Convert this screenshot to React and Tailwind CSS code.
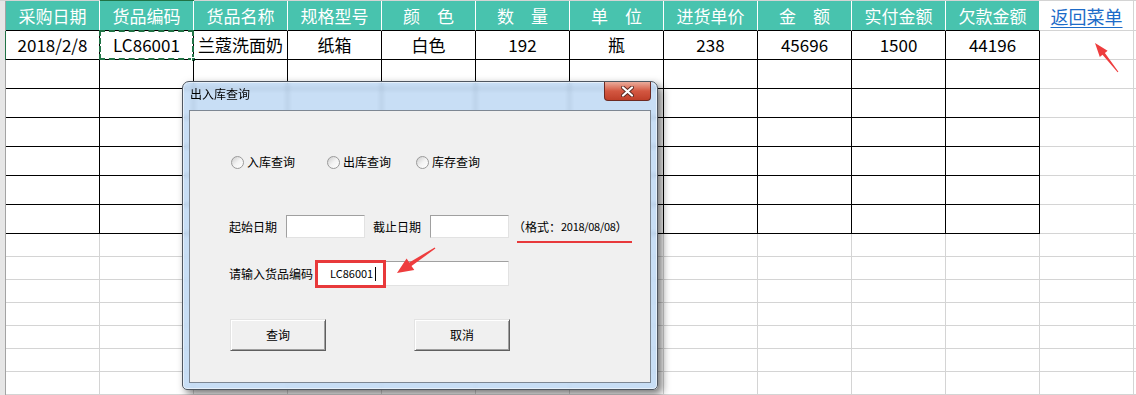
import React from 'react';

const columns = [
  { head: '采购日期', value: '2018/2/8' },
  { head: '货品编码', value: 'LC86001', selected: true },
  { head: '货品名称', value: '兰蔻洗面奶' },
  { head: '规格型号', value: '纸箱' },
  { head: '颜\u3000色', value: '白色' },
  { head: '数\u3000量', value: '192' },
  { head: '单\u3000位', value: '瓶' },
  { head: '进货单价', value: '238' },
  { head: '金\u3000额', value: '45696' },
  { head: '实付金额', value: '1500' },
  { head: '欠款金额', value: '44196' },
];

const font = "font-['Noto_Sans_CJK_SC',sans-serif]";

const RowStrip = ({ active }) => (
  <div
    className={`w-[6px] h-full shrink-0 bg-[#e6e6e6] border-r ${
      active ? 'border-[#217346]' : 'border-[#a3a3a3]'
    }`}
  />
);

const Radio = ({ label, className = '' }) => (
  <div className={`flex items-center ${className}`}>
    <span className="w-[13px] h-[13px] rounded-full border border-[#9a9a9a] bg-linear-to-br from-[#cdcdcd] via-[#f3f3f3] to-white shrink-0" />
    <span className="ml-[3px] text-[12px] leading-none text-black">{label}</span>
  </div>
);

const Field = ({ className = '', children }) => (
  <div
    className={`bg-white border border-t-[#a0a0a0] border-l-[#a0a0a0] border-b-[#e2e2e2] border-r-[#e2e2e2] ${className}`}
  >
    {children}
  </div>
);

const WinButton = ({ label, className = '' }) => (
  <button
    className={`w-[96px] h-[32px] bg-[#f0f0f0] border border-t-[#e3e3e3] border-l-[#e3e3e3] border-b-[#5f5f5f] border-r-[#5f5f5f] shadow-[inset_1px_1px_0_#fff,inset_-1px_-1px_0_#a0a0a0] text-[12px] text-black ${className}`}
  >
    {label}
  </button>
);

const Dialog = () => (
  <div className="absolute left-[182px] top-[81px] w-[476px] h-[309px] flex flex-col rounded-t-[7px] rounded-b-[5px] border border-[#4f5660] bg-[#bad6f3]/80 backdrop-blur-[2px] shadow-[4px_4px_9px_rgba(0,0,0,0.55),inset_0_0_0_1px_rgba(255,255,255,0.55)]">
    <div className="h-[28px] flex items-start justify-between shrink-0">
      <span className="pl-[7px] pt-[6px] text-[12px] text-black leading-none">出入库查询</span>
      <div className="mr-[6px] w-[47px] h-[19px] rounded-b-[4px] border border-t-0 border-[#6e2a22] bg-linear-to-b from-[#e9ab9b] via-[#d35741] to-[#bf3f29] flex items-center justify-center">
        <svg width="13" height="11" viewBox="0 0 13 11">
          <path d="M2 1.5 L11 9.5 M11 1.5 L2 9.5" stroke="#5a2a22" strokeWidth="4" strokeLinecap="round" />
          <path d="M2 1.5 L11 9.5 M11 1.5 L2 9.5" stroke="#ffffff" strokeWidth="2.2" strokeLinecap="round" />
        </svg>
      </div>
    </div>
    <div className="flex-1 mx-[6px] mb-[6px] bg-[#f0f0f0] border border-[#7d8793] pl-[39px] pt-[43px] flex flex-col">
      <div className="h-[16px] flex items-center ml-[2px]">
        <Radio label="入库查询" />
        <Radio label="出库查询" className="ml-[32px]" />
        <Radio label="库存查询" className="ml-[25px]" />
      </div>
      <div className="mt-[45px] h-[23px] flex items-center text-[12px] text-black">
        <span>起始日期</span>
        <Field className="ml-[9px] w-[79px] h-[23px]" />
        <span className="ml-[8px]">截止日期</span>
        <Field className="ml-[9px] w-[79px] h-[23px]" />
        <span className="ml-[4px] flex items-center">
          <span>（格式：</span>
          <span className="text-[11px] tracking-[-0.3px]">2018/08/08</span>
          <span>）</span>
        </span>
      </div>
      <div className="mt-[23px] h-[25px] flex items-center text-[12px] text-black">
        <span>请输入货品编码</span>
        <Field className="ml-[3px] w-[193px] h-[25px] flex items-center pl-[13px]">
          <span className="text-[11px] leading-none">LC86001</span>
          <span className="w-px h-[14px] bg-black ml-[2px]" />
        </Field>
      </div>
      <div className="mt-[33px] flex items-center ml-[1px]">
        <WinButton label="查询" />
        <WinButton label="取消" className="ml-[88px]" />
      </div>
    </div>
  </div>
);

export default function App() {
  return (
    <div className={`relative w-[1136px] h-[395px] overflow-hidden bg-white ${font}`}>
      {/* top edge of the column headers */}
      <div className="h-px flex">
        <div className="w-[100px] bg-[#d4d4d4]" />
        <div className="w-[94px] bg-[#217346]" />
        <div className="flex-1 bg-[#d4d4d4]" />
      </div>

      {/* header row */}
      <div className="h-[30px] flex">
        <RowStrip />
        {columns.map((c) => (
          <div
            key={c.head}
            className="w-[94px] h-full shrink-0 bg-[#48c3ae] border-r border-r-white border-b border-b-black flex items-center justify-center text-[17px] text-white"
          >
            {c.head}
          </div>
        ))}
        <div className="w-[94px] h-full shrink-0 border-r border-b border-[#d4d4d4] flex items-center justify-center">
          <span className="text-[18px] text-[#1c6bc8] underline underline-offset-[3px] leading-none">返回菜单</span>
        </div>
        <div className="flex-1 border-b border-[#d4d4d4]" />
      </div>

      {/* bordered data rows */}
      {Array.from({ length: 7 }).map((_, r) => (
        <div key={r} className="h-[29px] flex">
          <RowStrip active={r === 0} />
          {columns.map((c) => (
            <div
              key={c.head}
              className="relative w-[94px] h-full shrink-0 border-r border-b border-black flex items-center justify-center text-[17px] text-black"
            >
              {r === 0 ? c.value : null}
              {r === 0 && c.selected && (
                <>
                  <div className="absolute -left-px -top-px -right-px -bottom-px border-2 border-dashed border-[#217346]" />
                  <div className="absolute -right-[3px] -bottom-[3px] w-[5px] h-[5px] bg-[#217346] border border-white" />
                </>
              )}
            </div>
          ))}
          <div className="w-[94px] h-full shrink-0 border-r border-b border-[#d4d4d4]" />
          <div className="flex-1 border-b border-[#d4d4d4]" />
        </div>
      ))}

      {/* empty sheet rows */}
      {Array.from({ length: 7 }).map((_, r) => (
        <div key={r} className="h-[23px] flex">
          <RowStrip />
          {Array.from({ length: 12 }).map((__, i) => (
            <div key={i} className="w-[94px] h-full shrink-0 border-r border-b border-[#d4d4d4]" />
          ))}
          <div className="flex-1 border-b border-[#d4d4d4]" />
        </div>
      ))}

      <Dialog />

      {/* red annotations */}
      <div className="absolute left-[517px] top-[241px] w-[115px] h-[2px] bg-[#e8393b]" />
      <div className="absolute left-[315px] top-[260px] w-[71px] h-[28px] border-[3px] border-[#e8393b]" />
      <svg className="absolute left-0 top-0" width="1136" height="395" viewBox="0 0 1136 395">
        <polygon
          points="397,273 406.6,258.4 409.3,262.5 434.7,247.4 435.4,248.6 411.5,265.9 414.3,270"
          fill="#ee3d3e"
        />
        <polygon
          points="1095,43 1107.6,50.8 1104.9,53 1118.4,71.7 1117.6,72.3 1102.5,54.8 1099.8,57"
          fill="#ee3d3e"
        />
      </svg>
    </div>
  );
}
